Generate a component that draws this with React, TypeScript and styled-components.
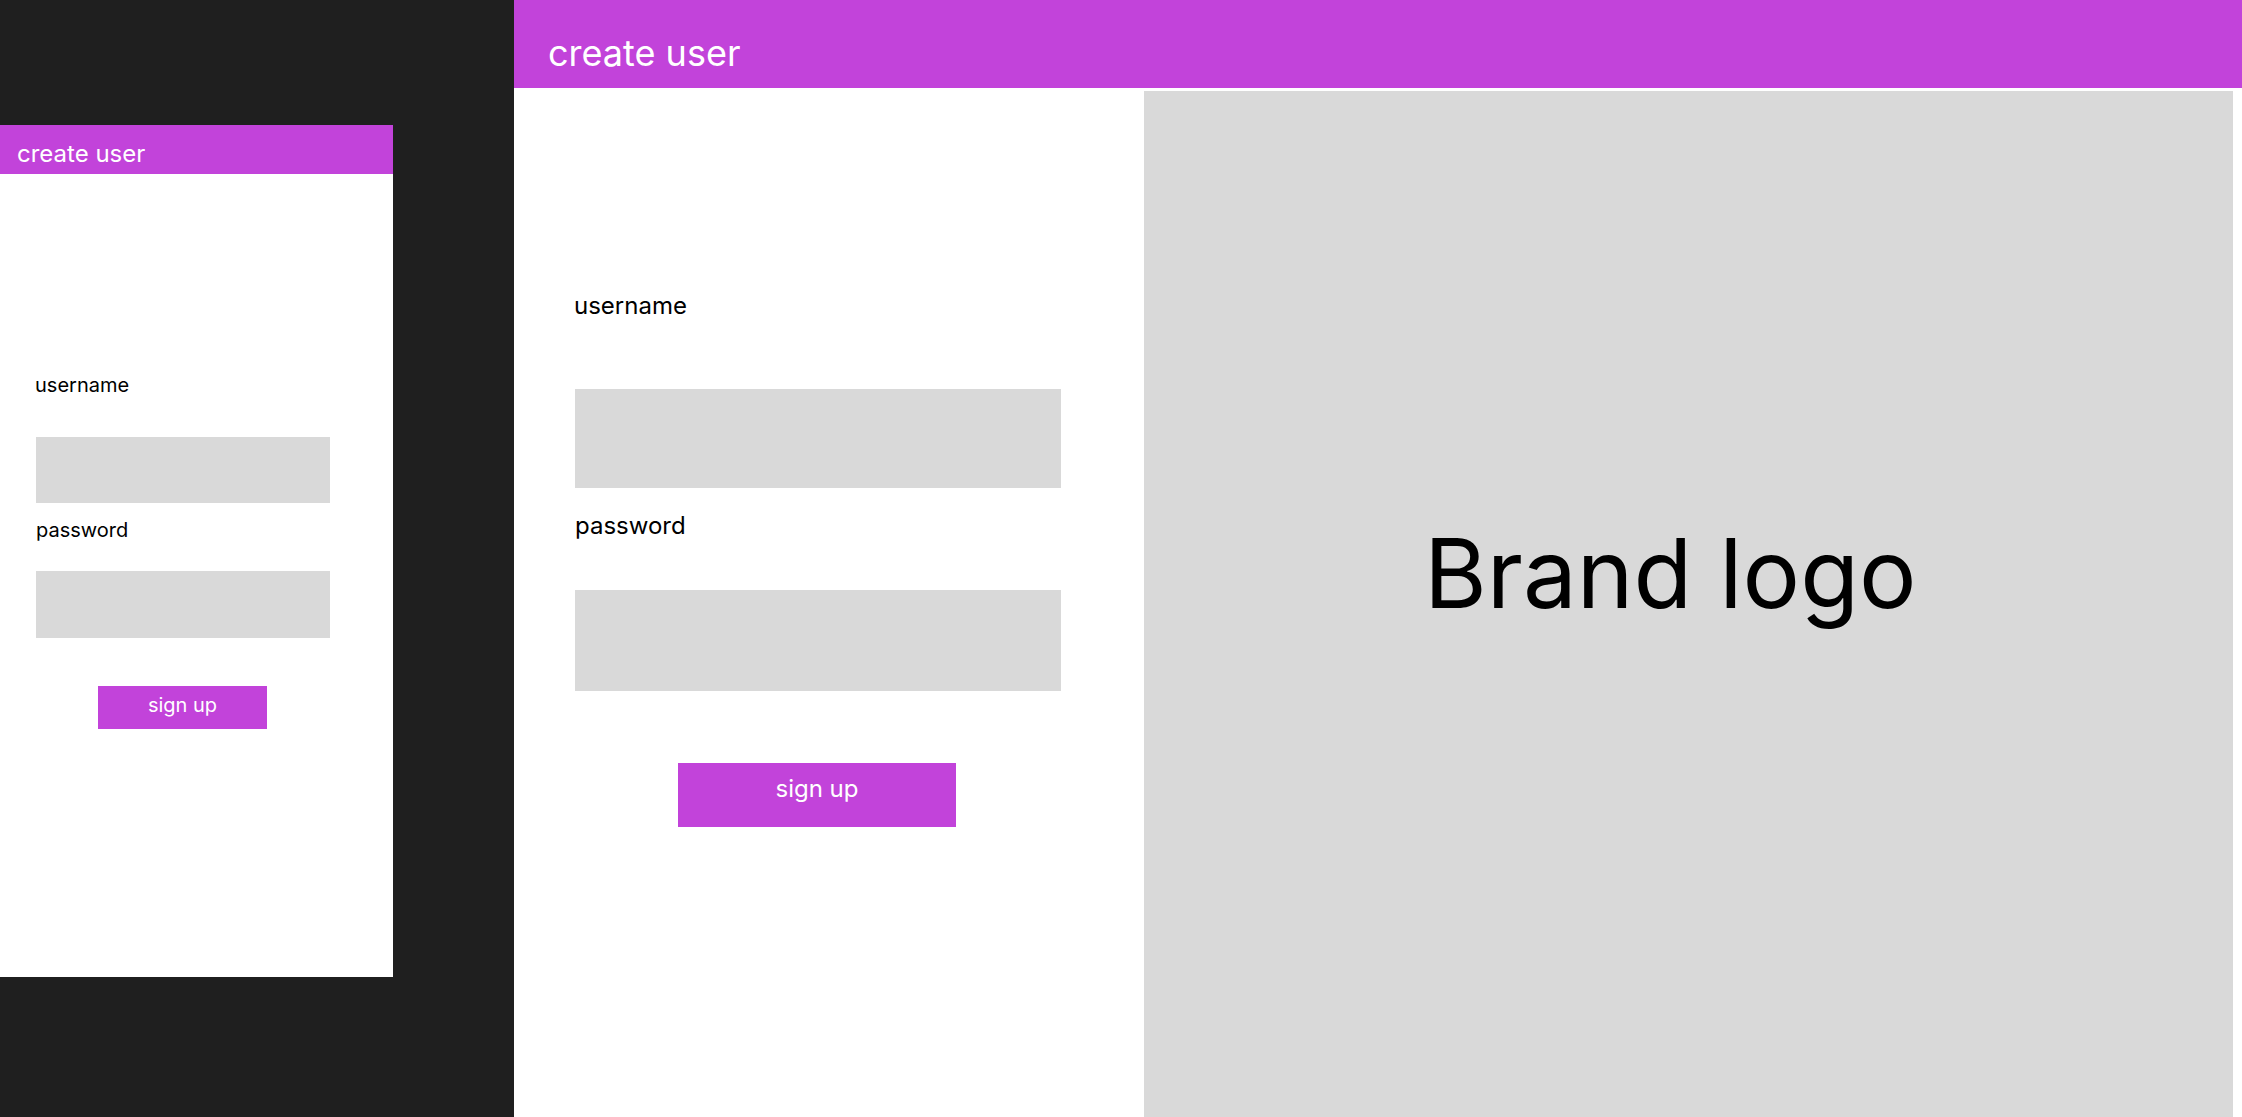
import React from "react";
import styled, { createGlobalStyle } from "styled-components";

const GlobalStyle = createGlobalStyle`
  html, body {
    margin: 0;
    padding: 0;
    background: #1f1f1f;
    overflow: hidden;
  }
  body {
    font-family: Inter, "Noto Sans", "Liberation Sans", sans-serif;
  }
  * { box-sizing: border-box; }
`;

const PURPLE = "#c243da";
const GREY = "#d9d9d9";

const Canvas = styled.div`
  display: flex;
  align-items: flex-start;
  width: 2242px;
  height: 1117px;
  gap: 121px;
  overflow: hidden;
`;

const MobileColumn = styled.div`
  padding-top: 125px;
  flex: 0 0 393px;
`;

const MobileFrame = styled.div`
  width: 393px;
  height: 852px;
  background: #fff;
  display: flex;
  flex-direction: column;
`;

const Header = styled.header<{ $size: "sm" | "lg" }>`
  background: ${PURPLE};
  color: #fff;
  flex: 0 0 auto;
  height: ${(p) => (p.$size === "sm" ? "49px" : "88px")};
  padding-left: ${(p) => (p.$size === "sm" ? "17px" : "34px")};
  padding-top: ${(p) => (p.$size === "sm" ? "14px" : "31px")};
  font-size: ${(p) => (p.$size === "sm" ? "24px" : "36px")};
  line-height: ${(p) => (p.$size === "sm" ? "29px" : "44px")};
  font-weight: 400;
`;

const Form = styled.div<{ $size: "sm" | "lg" }>`
  display: flex;
  flex-direction: column;
  align-items: flex-start;
  padding-left: ${(p) => (p.$size === "sm" ? "36px" : "61px")};
  padding-top: ${(p) => (p.$size === "sm" ? "199px" : "200px")};
`;

const Label = styled.div<{ $size: "sm" | "lg"; $gapAfter: number; $shift?: number }>`
  color: #000;
  font-size: ${(p) => (p.$size === "sm" ? "20px" : "24px")};
  line-height: ${(p) => (p.$size === "sm" ? "24px" : "29px")};
  margin-bottom: ${(p) => p.$gapAfter}px;
  margin-left: ${(p) => p.$shift ?? 0}px;
`;

const Field = styled.div<{ $w: number; $h: number; $gapAfter: number }>`
  width: ${(p) => p.$w}px;
  height: ${(p) => p.$h}px;
  background: ${GREY};
  margin-bottom: ${(p) => p.$gapAfter}px;
`;

const Button = styled.button<{ $size: "sm" | "lg"; $offset: number }>`
  border: none;
  background: ${PURPLE};
  color: #fff;
  font-family: inherit;
  display: flex;
  justify-content: center;
  align-items: flex-start;
  margin-left: ${(p) => p.$offset}px;
  width: ${(p) => (p.$size === "sm" ? "169px" : "278px")};
  height: ${(p) => (p.$size === "sm" ? "43px" : "64px")};
  padding: ${(p) => (p.$size === "sm" ? "7px 0 0" : "11px 0 0")};
  font-size: ${(p) => (p.$size === "sm" ? "20px" : "24px")};
  line-height: ${(p) => (p.$size === "sm" ? "24px" : "29px")};
`;

const DesktopFrame = styled.div`
  flex: 1 1 auto;
  height: 1117px;
  background: #fff;
  display: flex;
  flex-direction: column;
`;

const DesktopBody = styled.div`
  flex: 1 1 auto;
  display: flex;
  padding-top: 3px;
  padding-right: 9px;
`;

const FormColumn = styled.div`
  flex: 0 0 630px;
`;

const BrandPanel = styled.div`
  flex: 1 1 auto;
  background: ${GREY};
  padding-top: 424px;
  padding-left: 280px;
`;

const BrandText = styled.div`
  font-size: 96px;
  line-height: 116px;
  color: #000;
  white-space: nowrap;
`;

export default function App() {
  return (
    <>
      <GlobalStyle />
      <Canvas>
        <MobileColumn>
          <MobileFrame>
            <Header $size="sm">create user</Header>
            <Form $size="sm">
              <Label $size="sm" $gapAfter={40} $shift={-1}>username</Label>
              <Field $w={294} $h={66} $gapAfter={15} />
              <Label $size="sm" $gapAfter={29}>password</Label>
              <Field $w={294} $h={67} $gapAfter={48} />
              <Button $size="sm" $offset={62}>sign up</Button>
            </Form>
          </MobileFrame>
        </MobileColumn>
        <DesktopFrame>
          <Header $size="lg">create user</Header>
          <DesktopBody>
            <FormColumn>
              <Form $size="lg">
                <Label $size="lg" $gapAfter={69} $shift={-1}>username</Label>
                <Field $w={486} $h={99} $gapAfter={23} />
                <Label $size="lg" $gapAfter={50}>password</Label>
                <Field $w={486} $h={101} $gapAfter={72} />
                <Button $size="lg" $offset={103}>sign up</Button>
              </Form>
            </FormColumn>
            <BrandPanel>
              <BrandText>Brand logo</BrandText>
            </BrandPanel>
          </DesktopBody>
        </DesktopFrame>
      </Canvas>
    </>
  );
}
